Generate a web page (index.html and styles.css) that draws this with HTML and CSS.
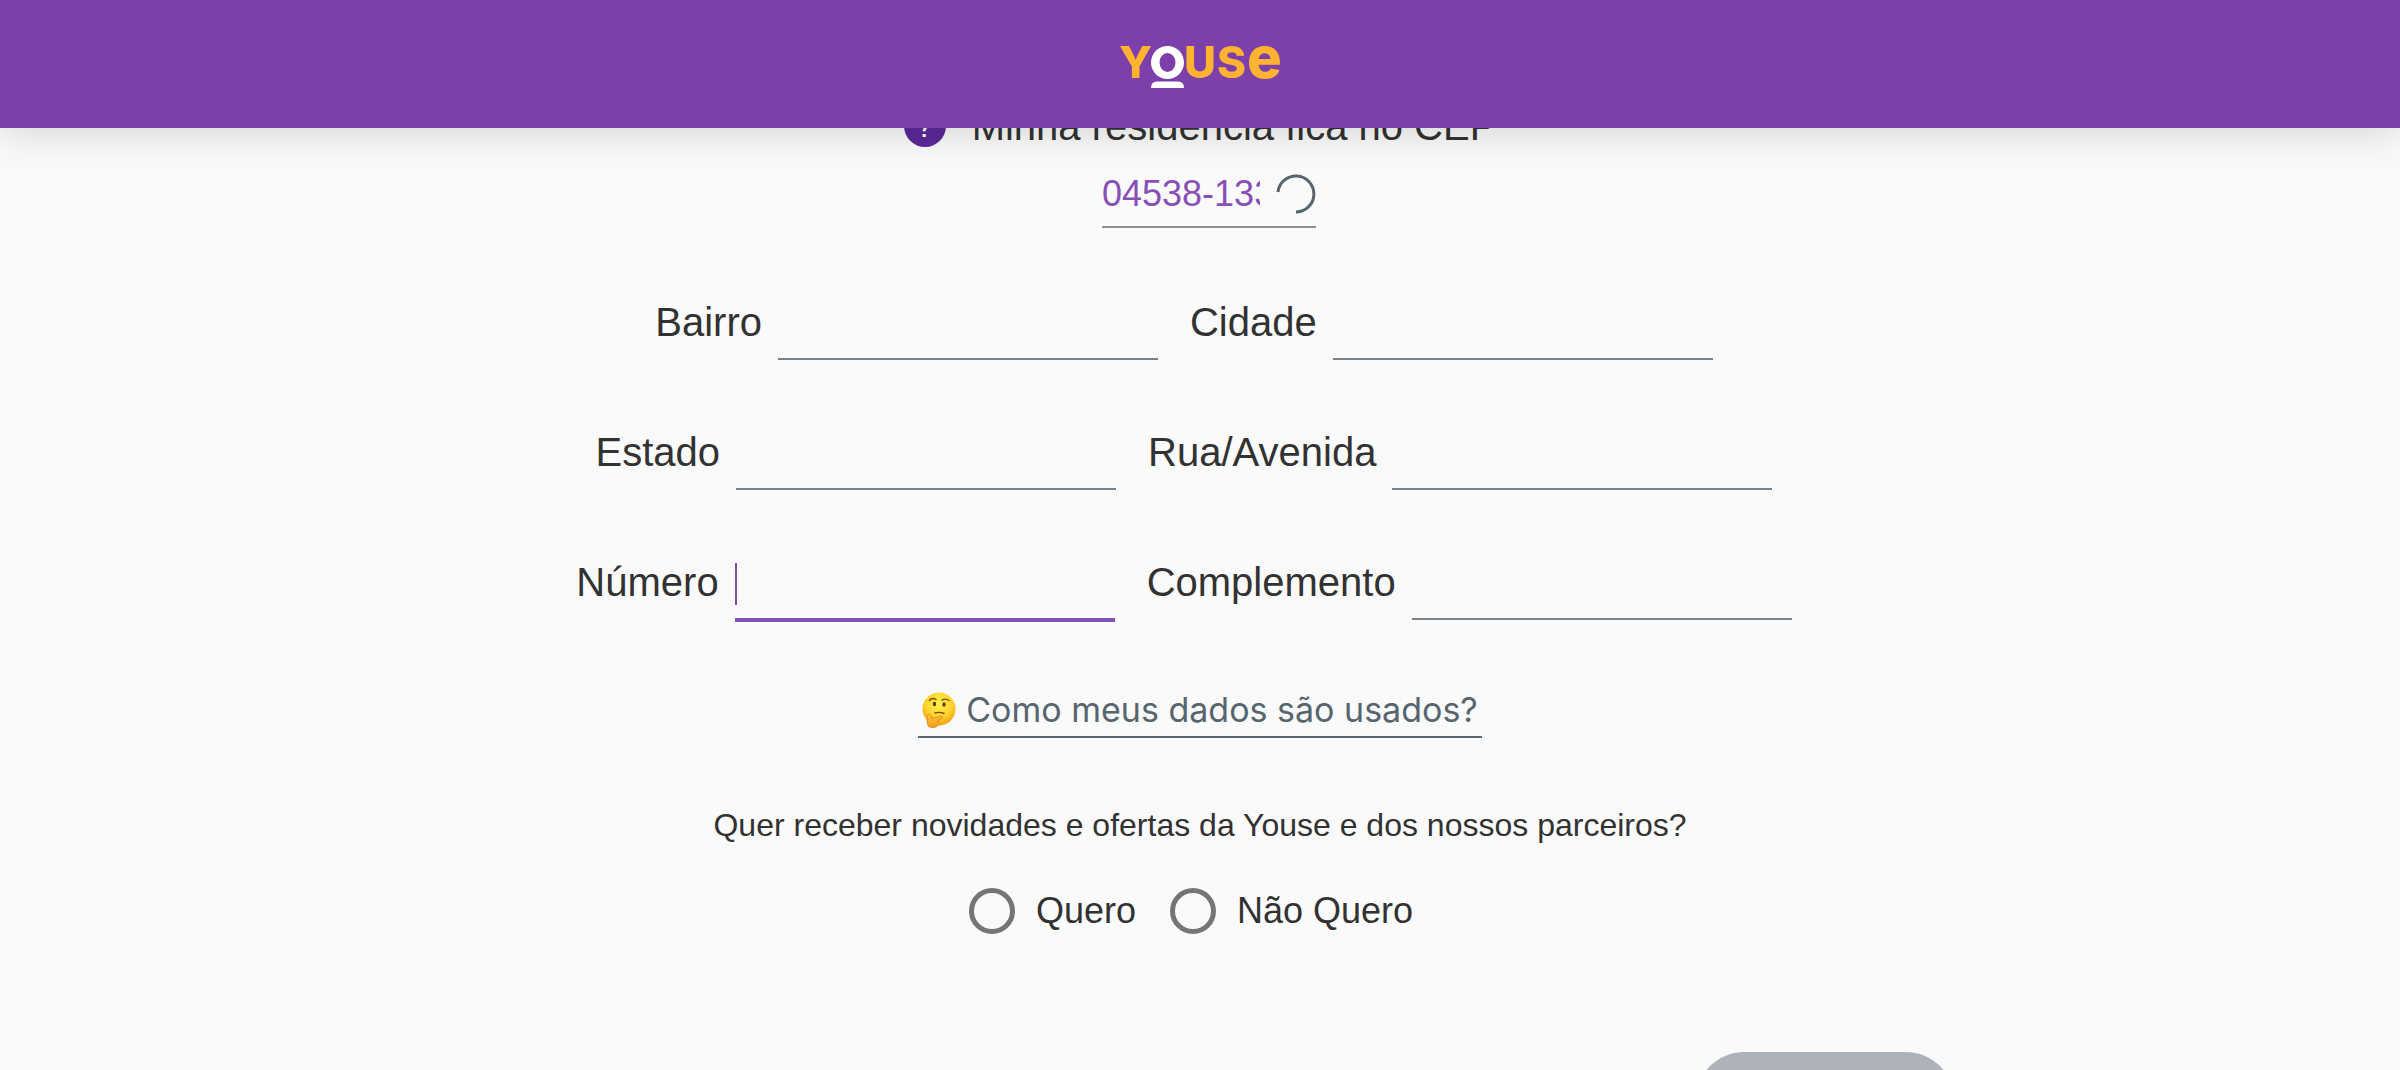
FILE: index.html
```html
<!DOCTYPE html>
<html lang="pt-BR">
<head>
<meta charset="utf-8">
<meta name="viewport" content="width=device-width, initial-scale=1">
<title>Youse</title>
<link rel="stylesheet" href="styles.css">
</head>
<body>
<header class="topbar">
  <svg class="logo" viewBox="0 0 168 46" role="img" aria-label="Youse">
    <g class="logo-word">
      <text class="logo-cap" x="3" y="37">Y</text>
      <text class="logo-cap" x="68" y="37">U</text>
      <text class="logo-cap" x="101" y="37">S</text>
      <text class="logo-low" x="131" y="37">e</text>
    </g>
    <path class="logo-ring" fill-rule="evenodd" d="M51.500 5a16.500 16.500 0 1 1 0 33a16.500 16.500 0 1 1 0-33ZM51.500 12a8 9.500 0 1 0 0 19a8 9.500 0 1 0 0-19Z"/>
    <path class="logo-ring" d="M41 40.500h21q6 0 6 6.500h-33q0-6.500 6-6.500Z"/>
  </svg>
</header>
<main class="page">
  <form class="form">
    <div class="heading">
      <span class="help">?</span>
      <label for="cep">Minha residência fica no CEP</label>
    </div>
    <div class="cep">
      <input class="cep-input" id="cep" type="text" value="04538-133">
      <svg class="spinner" viewBox="0 0 40 40" aria-hidden="true"><path d="M2 18A18 18 0 1 1 20 38"/></svg>
    </div>
    <div class="rows">
      <div class="row">
        <div class="field"><label for="bairro">Bairro</label><input class="line-input" id="bairro" type="text"></div>
        <div class="field"><label for="cidade">Cidade</label><input class="line-input" id="cidade" type="text"></div>
      </div>
      <div class="row">
        <div class="field"><label for="estado">Estado</label><input class="line-input" id="estado" type="text"></div>
        <div class="field"><label for="rua">Rua/Avenida</label><input class="line-input" id="rua" type="text"></div>
      </div>
      <div class="row">
        <div class="field"><label for="numero">Número</label><input class="line-input active" id="numero" type="text"></div>
        <div class="field"><label for="complemento">Complemento</label><input class="line-input" id="complemento" type="text"></div>
      </div>
    </div>
    <a class="data-link" href="#dados">
      <svg class="emoji" viewBox="0 0 34 36" aria-hidden="true">
        <defs>
          <radialGradient id="face" cx="50%" cy="35%" r="65%">
            <stop offset="0" stop-color="#fff04a"/><stop offset=".6" stop-color="#ffd42e"/><stop offset="1" stop-color="#f5a01a"/>
          </radialGradient>
          <linearGradient id="hand" x1="0" y1="0" x2="0" y2="1">
            <stop offset="0" stop-color="#ffc83a"/><stop offset="1" stop-color="#f39a1c"/>
          </linearGradient>
        </defs>
        <circle cx="17" cy="17" r="16.500" fill="url(#face)"/>
        <g fill="none" stroke="#7a4a0c" stroke-width="1.400" stroke-linecap="round">
          <path d="M7.500 8.500Q10 5 14 7.500"/><path d="M20 8Q24 6 27 8.500"/><path d="M13 21Q17 19.500 22 21.500"/>
        </g>
        <ellipse cx="12.500" cy="12" rx="1.600" ry="2.300" fill="#5a3408"/>
        <ellipse cx="22" cy="12.500" rx="1.600" ry="2.300" fill="#5a3408"/>
        <path d="M7 22.500q1.500-.8 2.200 1.500l.8 2.500 8.500-2.300q2.500-.2 2 1.600-.3 1-2.500 1.700l-2 .8q1.500 2.500.2 4.700-1.700 2.700-5.700 2.700-4.500 0-5.300-4-.5-3 .3-5.500l-.3-2.500q.2-1 1.800-1.200Z" fill="url(#hand)" stroke="#d97c12" stroke-width=".7"/>
      </svg>
      <span>Como meus dados são usados?</span>
    </a>
    <fieldset class="news">
      <legend>Quer receber novidades e ofertas da Youse e dos nossos parceiros?</legend>
      <div class="options">
        <label class="option"><input type="radio" name="news" value="sim"><span>Quero</span></label>
        <label class="option"><input type="radio" name="news" value="nao"><span>Não Quero</span></label>
      </div>
    </fieldset>
    <button class="submit" type="submit" aria-label="Continuar" disabled></button>
  </form>
</main>
</body>
</html>
```
FILE: styles.css
```css
* { box-sizing: border-box; }

body {
  margin: 0;
  height: 100vh;
  overflow: hidden;
  background: #fafafa;
  color: #323232;
  font: 40px/48px "Liberation Sans", Arial, sans-serif;
}

.topbar {
  position: fixed;
  inset: 0 0 auto 0;
  z-index: 2;
  display: flex;
  align-items: center;
  justify-content: center;
  height: 128px;
  background: #7d40ab;
  box-shadow: 0 4px 40px rgba(0, 0, 0, .16);
}

.logo { width: 168px; height: 46px; overflow: visible; }
.logo-word { fill: #ffb330; font-family: Inter, sans-serif; font-weight: 800; }
.logo-cap { font-size: 44px; }
.logo-low { font-size: 58px; }
.logo-ring { fill: #fff; }

.page { padding: 102px 32px 0; }

.form {
  display: flex;
  flex-direction: column;
  align-items: center;
  max-width: 1508px;
  margin: 0 auto;
}

.heading { display: flex; align-items: center; gap: 26px; }
.help {
  width: 42px;
  height: 42px;
  border-radius: 50%;
  background: #5c2a99;
  color: #fff;
  font-size: 32px;
  line-height: 42px;
  text-align: center;
}

.cep {
  display: flex;
  align-items: center;
  gap: 16px;
  height: 66px;
  margin: 12px 0 62px 18px;
  border-bottom: 2px solid #8f8f8f;
}
.cep-input {
  width: 158px;
  height: 64px;
  padding: 0;
  border: 0;
  outline: 0;
  background: none;
  color: #8750b7;
  font: inherit;
  font-size: 36px;
}
.spinner { width: 40px; height: 40px; fill: none; stroke: #57656f; stroke-width: 3; }

.rows { display: flex; flex-direction: column; align-items: center; gap: 60px; }
.row { display: flex; align-items: baseline; }
.field { display: flex; align-items: baseline; gap: 16px; margin-right: 32px; }
.line-input {
  box-sizing: content-box;
  width: 380px;
  height: 68px;
  padding: 0;
  border: 0;
  border-bottom: 2px solid #75818b;
  border-radius: 0;
  outline: 0;
  background: none;
  color: #8750b7;
  font: inherit;
  font-size: 36px;
}
.line-input.active {
  border-bottom: 4px solid #8750b7;
  background: linear-gradient(#8750b7, #8750b7) left center / 2px 42px no-repeat;
  caret-color: transparent;
}

.data-link {
  display: flex;
  align-items: center;
  gap: 10px;
  margin-top: 66px;
  padding: 0 4px 4px;
  border-bottom: 2px solid #57656f;
  color: #57656f;
  font: 34px/44px Inter, sans-serif;
  text-decoration: none;
}
.emoji { width: 34px; height: 36px; }

.news {
  display: flex;
  flex-direction: column;
  align-items: center;
  margin: 67px 0 0;
  padding: 0;
  border: 0;
  font-size: 32px;
  line-height: 40px;
}
.news legend { padding: 0; }
.options { display: flex; justify-content: center; margin-top: 43px; font-size: 36px; }
.option { display: flex; align-items: center; gap: 21px; height: 46px; padding: 0 26px 0 8px; }
.option input {
  appearance: none;
  width: 46px;
  height: 46px;
  margin: 0;
  border: 5px solid #757575;
  border-radius: 50%;
}

.submit {
  align-self: flex-end;
  width: 258px;
  height: 96px;
  margin-top: 118px;
  border: 0;
  border-radius: 48px;
  background: #aeb3ba;
}
```
